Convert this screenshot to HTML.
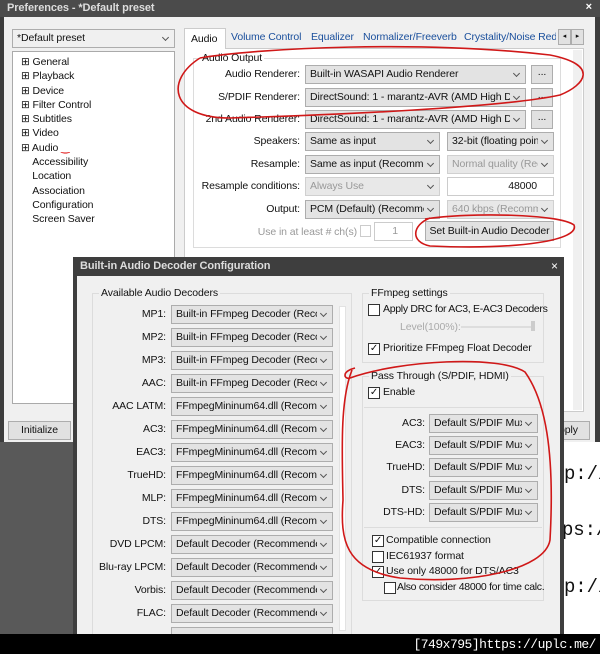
<!DOCTYPE html>
<html><head><meta charset="utf-8"><style>
*{box-sizing:border-box;margin:0;padding:0}
body{width:600px;height:654px;overflow:hidden;background:#fff;font-family:"Liberation Sans",sans-serif;font-size:10.5px;color:#111;position:relative;letter-spacing:-0.1px}
.a{position:absolute;white-space:nowrap}
.cb{position:absolute;height:19px;background:#e3e3e3;border:1px solid #adadad;padding:2px 14px 0 4px;white-space:nowrap;overflow:hidden;font-size:10.5px}
.cb:before{content:"";position:absolute;right:0;top:0;bottom:0;width:15px;background:inherit}
.cb:after{content:"";position:absolute;right:6px;top:5px;width:4px;height:4px;border-right:1px solid #555;border-bottom:1px solid #555;transform:rotate(45deg)}
.dis{color:#999;background:#e8e8e8;border-color:#d0d0d0}
.lbl{position:absolute;text-align:right;white-space:nowrap;font-size:10.5px}
.btn{position:absolute;background:#e1e1e1;border:1px solid #adadad;text-align:center;font-size:10.5px;white-space:nowrap}
.grp{position:absolute;border:1px solid #dcdcdc}
.gt{position:absolute;background:#f0f0f0;padding:0 2px;top:-7px;left:6px;font-size:10.5px;white-space:nowrap}
.chk{position:absolute;width:12px;height:12px;border:1px solid #333;background:#fff;font-size:10px;line-height:10px;text-align:center}
</style></head><body>
<div class="a" style="left:0;top:0;width:600px;height:442px;background:#3c3c3c"></div>
<div class="a" style="left:0;top:0;width:600px;height:17px;background:#4b4b4b;color:#ddd;font-weight:bold;padding:2px 0 0 7px;font-size:11px">Preferences - *Default preset<span style="position:absolute;right:8px;top:1px;color:#fff">×</span></div>
<div class="a" style="left:4px;top:17px;width:591px;height:425px;background:#f0f0f0"></div>
<div class="cb" style="left:12px;top:29px;width:163px;background:#f0f0f0">*Default preset</div>
<div class="a" style="left:12px;top:51px;width:163px;height:353px;background:#fff;border:1px solid #aaa;line-height:14.3px;padding:3px 0 0 8px">
<div>⊞ General</div><div>⊞ Playback</div><div>⊞ Device</div><div>⊞ Filter Control</div><div>⊞ Subtitles</div><div>⊞ Video</div><div>⊞ Audio <span style="color:#d00">‿</span></div><div>&nbsp;&nbsp;&nbsp;&nbsp;Accessibility</div><div>&nbsp;&nbsp;&nbsp;&nbsp;Location</div><div>&nbsp;&nbsp;&nbsp;&nbsp;Association</div><div>&nbsp;&nbsp;&nbsp;&nbsp;Configuration</div><div>&nbsp;&nbsp;&nbsp;&nbsp;Screen Saver</div></div>
<div class="a" style="left:184px;top:48px;width:400px;height:364px;background:#fff;border:1px solid #ccc"></div>
<div class="a" style="left:184px;top:28px;width:42px;height:21px;background:#fff;border:1px solid #ccc;border-bottom:none;padding:4px 0 0 6px">Audio</div>
<div class="a" style="left:231px;top:31px;color:#1a4f9c">Volume Control</div>
<div class="a" style="left:311px;top:31px;color:#1a4f9c">Equalizer</div>
<div class="a" style="left:363px;top:31px;color:#1a4f9c;width:98px;overflow:hidden">Normalizer/Freeverb</div>
<div class="a" style="left:464px;top:31px;color:#1a4f9c;width:92px;overflow:hidden">Crystality/Noise Reduction</div>
<div class="btn" style="left:558px;top:29px;width:13px;height:16px;font-size:7px;line-height:14px">◂</div>
<div class="btn" style="left:571px;top:29px;width:13px;height:16px;font-size:7px;line-height:14px">▸</div>
<div class="a" style="left:573px;top:50px;width:9px;height:360px;background:#f0f0f0"></div>
<div class="grp" style="left:193px;top:58px;width:368px;height:190px"><div class="gt" style="background:#fff">Audio Output</div></div>
<div class="lbl" style="left:180px;width:120px;top:68px">Audio Renderer:</div>
<div class="cb" style="left:305px;top:65px;width:221px">Built-in WASAPI Audio Renderer</div>
<div class="btn" style="left:531px;top:65px;width:22px;height:19px">...</div>
<div class="lbl" style="left:180px;width:120px;top:91px">S/PDIF Renderer:</div>
<div class="cb" style="left:305px;top:88px;width:221px">DirectSound: 1 - marantz-AVR (AMD High Defini</div>
<div class="btn" style="left:531px;top:88px;width:22px;height:19px">...</div>
<div class="lbl" style="left:180px;width:120px;top:113px">2nd Audio Renderer:</div>
<div class="cb" style="left:305px;top:110px;width:221px">DirectSound: 1 - marantz-AVR (AMD High Defini</div>
<div class="btn" style="left:531px;top:110px;width:22px;height:19px">...</div>
<div class="lbl" style="left:180px;width:120px;top:135px">Speakers:</div>
<div class="cb" style="left:305px;top:132px;width:135px">Same as input</div>
<div class="cb" style="left:447px;top:132px;width:107px">32-bit (floating point)</div>
<div class="lbl" style="left:180px;width:120px;top:158px">Resample:</div>
<div class="cb" style="left:305px;top:155px;width:135px">Same as input (Recommended)</div>
<div class="cb dis" style="left:447px;top:155px;width:107px">Normal quality (Recommended)</div>
<div class="lbl" style="left:160px;width:140px;top:180px">Resample conditions:</div>
<div class="cb dis" style="left:305px;top:177px;width:135px">Always Use</div>
<div class="a" style="left:447px;top:177px;width:107px;height:19px;background:#fff;border:1px solid #ccc;text-align:right;padding:2px 16px 0 0">48000</div>
<div class="lbl" style="left:180px;width:120px;top:203px">Output:</div>
<div class="cb" style="left:305px;top:200px;width:135px">PCM (Default) (Recommended)</div>
<div class="cb dis" style="left:447px;top:200px;width:107px">640 kbps (Recommended)</div>
<div class="lbl" style="left:230px;width:127px;top:226px;color:#999">Use in at least # ch(s)</div>
<div class="a" style="left:360px;top:225px;width:11px;height:12px;border:1px solid #ccc;background:#fff"></div>
<div class="a" style="left:374px;top:222px;width:39px;height:19px;border:1px solid #ccc;background:#fff;text-align:right;padding:2px 14px 0 0;color:#999">1</div>
<div class="btn" style="left:425px;top:221px;width:129px;height:20px;padding-top:3px">Set Built-in Audio Decoder</div>
<div class="btn" style="left:8px;top:421px;width:63px;height:19px;padding-top:2px">Initialize</div>
<div class="btn" style="left:540px;top:421px;width:50px;height:19px;padding-top:2px">Apply</div>
<div class="a" style="left:0;top:442px;width:75px;height:192px;background:#595959"></div>
<div class="a" style="left:564px;top:442px;width:36px;height:192px;background:#fff;overflow:hidden;font-family:'Liberation Mono',monospace;font-size:19px;line-height:20px">
<div style="position:absolute;top:22px;left:0">p://u</div><div style="position:absolute;top:78px;left:-2px">ps://</div><div style="position:absolute;top:135px;left:0">p://u</div></div>
<div class="a" style="left:73px;top:257px;width:491px;height:380px;background:#3e3e3e"></div>
<div class="a" style="left:80px;top:260px;color:#ddd;font-weight:bold;font-size:11px">Built-in Audio Decoder Configuration</div>
<div class="a" style="left:551px;top:259px;color:#fff;font-size:12px">×</div>
<div class="a" style="left:77px;top:276px;width:483px;height:360px;background:#f0f0f0"></div>
<div class="grp" style="left:92px;top:293px;width:260px;height:345px"><div class="gt">Available Audio Decoders</div></div>
<div class="a" style="left:339px;top:306px;width:7px;height:325px;background:#fff;border:1px solid #e2e2e2"></div>
<div class="grp" style="left:362px;top:293px;width:182px;height:70px"><div class="gt">FFmpeg settings</div></div>
<div class="chk" style="left:368px;top:304px"></div><div class="a" style="left:383px;top:303px;letter-spacing:-0.3px">Apply DRC for AC3, E-AC3 Decoders</div>
<div class="a" style="left:400px;top:321px;color:#aaa">Level(100%):</div>
<div class="a" style="left:461px;top:326px;width:74px;height:2px;background:#ddd"></div><div class="a" style="left:531px;top:321px;width:4px;height:10px;background:#ccc"></div>
<div class="chk" style="left:368px;top:343px">✓</div><div class="a" style="left:383px;top:342px">Prioritize FFmpeg Float Decoder</div>
<div class="grp" style="left:362px;top:376px;width:182px;height:225px"><div class="gt">Pass Through (S/PDIF, HDMI)</div></div>
<div class="chk" style="left:368px;top:387px">✓</div><div class="a" style="left:383px;top:386px">Enable</div>
<div class="a" style="left:364px;top:407px;width:178px;height:1px;background:#dcdcdc"></div>
<div class="a" style="left:364px;top:527px;width:178px;height:1px;background:#dcdcdc"></div>
<div class="lbl" style="left:370px;width:55px;top:417px">AC3:</div><div class="cb" style="left:429px;top:414px;width:109px">Default S/PDIF Muxer</div>
<div class="lbl" style="left:370px;width:55px;top:439px">EAC3:</div><div class="cb" style="left:429px;top:436px;width:109px">Default S/PDIF Muxer</div>
<div class="lbl" style="left:370px;width:55px;top:461px">TrueHD:</div><div class="cb" style="left:429px;top:458px;width:109px">Default S/PDIF Muxer</div>
<div class="lbl" style="left:370px;width:55px;top:484px">DTS:</div><div class="cb" style="left:429px;top:481px;width:109px">Default S/PDIF Muxer</div>
<div class="lbl" style="left:360px;width:65px;top:506px">DTS-HD:</div><div class="cb" style="left:429px;top:503px;width:109px">Default S/PDIF Muxer</div>
<div class="chk" style="left:372px;top:535px">✓</div><div class="a" style="left:386px;top:534px">Compatible connection</div>
<div class="chk" style="left:372px;top:551px"></div><div class="a" style="left:386px;top:550px">IEC61937 format</div>
<div class="chk" style="left:372px;top:566px">✓</div><div class="a" style="left:386px;top:565px">Use only 48000 for DTS/AC3</div>
<div class="chk" style="left:384px;top:582px"></div><div class="a" style="left:397px;top:581px;letter-spacing:-0.3px">Also consider 48000 for time calc.</div>
<div class="lbl" style="left:100px;width:66px;top:308px">MP1:</div><div class="cb" style="left:171px;top:305px;width:162px">Built-in FFmpeg Decoder (Recommended)</div>
<div class="lbl" style="left:100px;width:66px;top:331px">MP2:</div><div class="cb" style="left:171px;top:328px;width:162px">Built-in FFmpeg Decoder (Recommended)</div>
<div class="lbl" style="left:100px;width:66px;top:354px">MP3:</div><div class="cb" style="left:171px;top:351px;width:162px">Built-in FFmpeg Decoder (Recommended)</div>
<div class="lbl" style="left:100px;width:66px;top:377px">AAC:</div><div class="cb" style="left:171px;top:374px;width:162px">Built-in FFmpeg Decoder (Recommended)</div>
<div class="lbl" style="left:100px;width:66px;top:400px">AAC LATM:</div><div class="cb" style="left:171px;top:397px;width:162px">FFmpegMininum64.dll (Recommended)</div>
<div class="lbl" style="left:100px;width:66px;top:423px">AC3:</div><div class="cb" style="left:171px;top:420px;width:162px">FFmpegMininum64.dll (Recommended)</div>
<div class="lbl" style="left:100px;width:66px;top:446px">EAC3:</div><div class="cb" style="left:171px;top:443px;width:162px">FFmpegMininum64.dll (Recommended)</div>
<div class="lbl" style="left:100px;width:66px;top:469px">TrueHD:</div><div class="cb" style="left:171px;top:466px;width:162px">FFmpegMininum64.dll (Recommended)</div>
<div class="lbl" style="left:100px;width:66px;top:492px">MLP:</div><div class="cb" style="left:171px;top:489px;width:162px">FFmpegMininum64.dll (Recommended)</div>
<div class="lbl" style="left:100px;width:66px;top:515px">DTS:</div><div class="cb" style="left:171px;top:512px;width:162px">FFmpegMininum64.dll (Recommended)</div>
<div class="lbl" style="left:96px;width:70px;top:538px">DVD LPCM:</div><div class="cb" style="left:171px;top:535px;width:162px">Default Decoder (Recommended)</div>
<div class="lbl" style="left:92px;width:74px;top:561px">Blu-ray LPCM:</div><div class="cb" style="left:171px;top:558px;width:162px">Default Decoder (Recommended)</div>
<div class="lbl" style="left:100px;width:66px;top:584px">Vorbis:</div><div class="cb" style="left:171px;top:581px;width:162px">Default Decoder (Recommended)</div>
<div class="lbl" style="left:100px;width:66px;top:607px">FLAC:</div><div class="cb" style="left:171px;top:604px;width:162px">Default Decoder (Recommended)</div>
<div class="cb" style="left:171px;top:627px;width:162px"></div>
<svg class="a" style="left:0;top:0" width="600" height="654"><g fill="none" stroke="#d01818" stroke-width="1.6">
<path d="M200,58 C260,48 420,40 550,55 C600,65 585,85 560,95 C500,108 330,115 230,118 C170,118 165,80 200,58"/>
<path d="M425,219 C470,212 560,214 574,225 C580,240 520,250 430,246 C410,242 412,225 430,218"/>
<path d="M355,368 C340,372 345,380 350,378 C400,360 500,355 525,372 C545,400 555,450 550,540 C545,570 470,585 400,578 C345,570 340,540 343,500 C342,450 340,400 352,370"/>
</g></svg>
<div class="a" style="left:0;top:634px;width:600px;height:20px;background:#000;color:#fff;font-family:'Liberation Mono',monospace;font-size:13px;letter-spacing:-0.5px;text-align:right;padding:3px 4px 0 0">[749x795]https://uplc.me/</div>
</body></html>
